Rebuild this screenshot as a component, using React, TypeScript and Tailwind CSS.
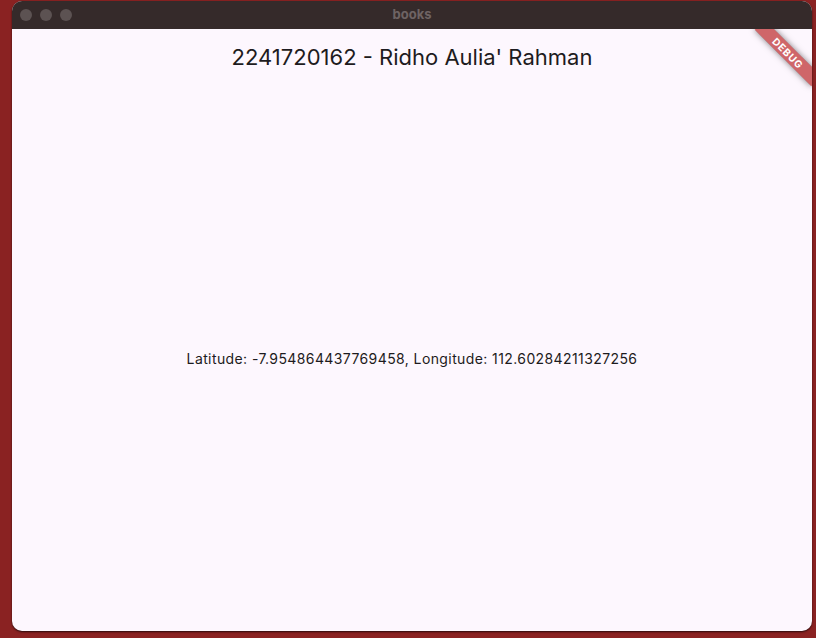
import React from "react";

const latitude = -7.954864437769458;
const longitude = 112.60284211327256;

function DebugBanner() {
  return (
    <div className="pointer-events-none absolute right-0 top-0 h-[80px] w-[80px] overflow-hidden">
      <div className="absolute left-[16px] top-[17px] flex h-[14px] w-[80px] rotate-45 items-center justify-center bg-[rgba(183,28,28,0.66)] shadow-[0_0_6px_rgba(0,0,0,0.5)]">
        <span className="text-[10px] font-bold leading-none tracking-[0.8px] text-white">DEBUG</span>
      </div>
    </div>
  );
}

export default function App() {
  return (
    <div className="flex h-[638px] w-[816px] items-start bg-[#8a2222] pl-[12px] pt-[1px] font-['Inter','Liberation_Sans',sans-serif]">
      <div className="flex h-[630px] w-[800px] flex-col overflow-hidden rounded-[10px] bg-[#fdf7fe] shadow-[0_1px_2px_rgba(0,0,0,0.7)]">
        <div className="relative flex h-[28px] shrink-0 items-center justify-center bg-[#352a2a]">
          <div className="absolute left-[8px] top-[8px] flex gap-[8px]">
            <span className="h-[12px] w-[12px] rounded-full bg-[#5c5252]" />
            <span className="h-[12px] w-[12px] rounded-full bg-[#5c5252]" />
            <span className="h-[12px] w-[12px] rounded-full bg-[#5c5252]" />
          </div>
          <span className="text-[13px] font-bold text-[#6e6363]">books</span>
        </div>
        <div className="relative flex flex-1 flex-col">
          <header className="flex h-[56px] shrink-0 items-center justify-center">
            <h1 className="text-[22px] font-normal text-[#1d1b20]">2241720162 - Ridho Aulia' Rahman</h1>
          </header>
          <main className="flex flex-1 items-center justify-center">
            <p className="text-[14px] tracking-[0.4px] text-[#1d1b20]">
              Latitude: {latitude}, Longitude: {longitude}
            </p>
          </main>
          <DebugBanner />
        </div>
      </div>
    </div>
  );
}
